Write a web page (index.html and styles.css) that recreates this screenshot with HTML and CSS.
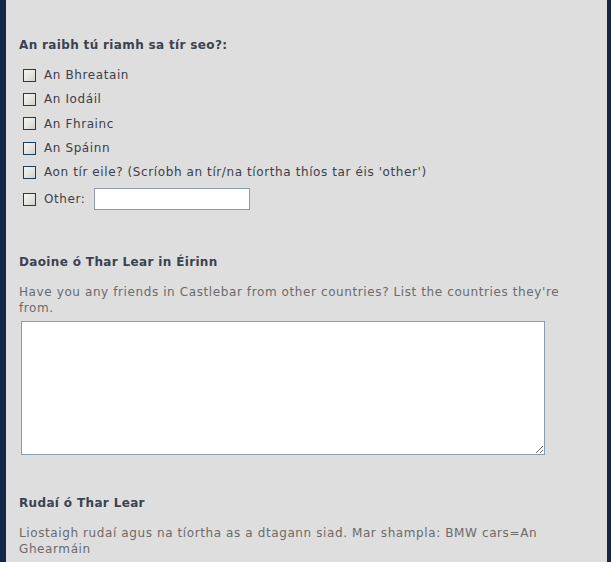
FILE: index.html
```html
<!DOCTYPE html>
<html>
<head>
<meta charset="utf-8">
<link rel="stylesheet" href="styles.css">
</head>
<body>
<div class="frame">
  <div class="content">
    <section class="q q-first">
      <h2 class="q-title">An raibh tú riamh sa tír seo?:</h2>
      <div class="opts">
        <label class="opt"><input type="checkbox" class="cb"><span>An Bhreatain</span></label>
        <label class="opt"><input type="checkbox" class="cb"><span>An Iodáil</span></label>
        <label class="opt"><input type="checkbox" class="cb"><span>An Fhrainc</span></label>
        <label class="opt"><input type="checkbox" class="cb"><span>An Spáinn</span></label>
        <label class="opt"><input type="checkbox" class="cb"><span>Aon tír eile? (Scríobh an tír/na tíortha thíos tar éis 'other')</span></label>
        <label class="opt opt-other"><input type="checkbox" class="cb"><span>Other:</span><input type="text" class="txt"></label>
      </div>
    </section>
    <section class="q q-second">
      <h2 class="q-title">Daoine ó Thar Lear in Éirinn</h2>
      <p class="q-desc">Have you any friends in Castlebar from other countries? List the countries they're from.</p>
      <textarea class="area"></textarea>
    </section>
    <section class="q q-third">
      <h2 class="q-title">Rudaí ó Thar Lear</h2>
      <p class="q-desc">Liostaigh rudaí agus na tíortha as a dtagann siad. Mar shampla: BMW cars=An Ghearmáin</p>
    </section>
  </div>
</div>
</body>
</html>
```

FILE: styles.css
```css
html, body {
  margin: 0;
  padding: 0;
  background: #dedede;
}
body {
  font-family: "DejaVu Sans", Verdana, sans-serif;
  overflow: hidden;
}
.frame {
  border-left: 6px solid #10284a;
  border-right: 4px solid #10284a;
  min-height: 562px;
  box-sizing: border-box;
  background: #dedede;
}
.content {
  padding: 37px 18px 0 13px;
}
.q-title {
  margin: 0;
  font-size: 12px;
  line-height: 16px;
  font-weight: bold;
  letter-spacing: 0.35px;
  color: #3b4250;
}
.opts {
  margin-top: 10px;
  display: flex;
  flex-direction: column;
}
.opt {
  display: flex;
  align-items: center;
  height: 24.3px;
  font-size: 12px;
  letter-spacing: 0.6px;
  color: #3d4049;
}
.opt-other {
  margin-top: 3px;
  height: 24px;
}
.cb {
  appearance: none;
  -webkit-appearance: none;
  width: 13px;
  height: 13px;
  margin: 0 8px 0 4px;
  border: 1px solid #1d3b5c;
  background: linear-gradient(135deg, #f4f4f2 0%, #e6e6e2 50%, #d2d2cc 100%);
  box-sizing: border-box;
  flex: none;
}
.txt {
  margin-left: 8px;
  width: 156px;
  height: 22px;
  box-sizing: border-box;
  border: 1px solid #8a9bb0;
  background: #fff;
  padding: 0 3px;
  font: inherit;
}
.q-second {
  margin-top: 43px;
}
.q-third {
  margin-top: 40px;
}
.q-desc {
  margin: 14px 0 0;
  font-size: 12px;
  line-height: 16px;
  letter-spacing: 0.6px;
  color: #6b6b6b;
}
.area {
  display: block;
  margin: 5px 0 0 2px;
  width: 524px;
  height: 134px;
  box-sizing: border-box;
  border: 1px solid #8a9bb0;
  background: #fff;
  resize: both;
}
```
